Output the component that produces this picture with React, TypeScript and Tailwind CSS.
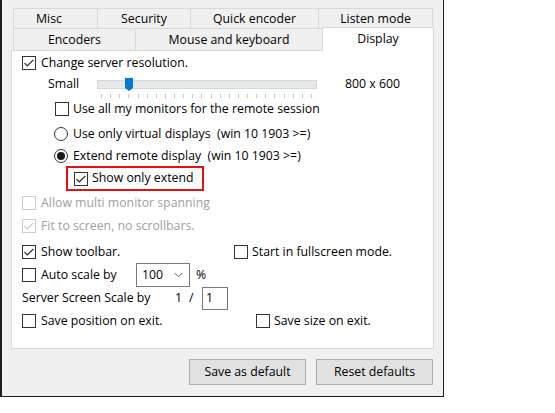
import React from "react";

function CheckBox({ checked = false, disabled = false }: { checked?: boolean; disabled?: boolean }) {
  return (
    <span
      className={
        "flex h-[14px] w-[14px] shrink-0 items-center justify-center border bg-white " +
        (disabled ? "border-[#cccccc]" : "border-[#333333]")
      }
    >
      {checked && (
        <svg width="12" height="12" viewBox="0 0 12 12">
          <path
            d="M1.5 6.2 L4.3 9 L10.4 2.8"
            fill="none"
            stroke={disabled ? "#c8c8c8" : "#222222"}
            strokeWidth="1.2"
          />
        </svg>
      )}
    </span>
  );
}

function Radio({ checked = false }: { checked?: boolean }) {
  return (
    <span className="flex h-[14px] w-[14px] shrink-0 items-center justify-center rounded-full border border-[#333333] bg-white">
      {checked && <span className="h-[8px] w-[8px] rounded-full bg-[#1a1a1a]" />}
    </span>
  );
}

function Tab({ label, w, className = "" }: { label: string; w: string; className?: string }) {
  return (
    <div className={`flex items-center justify-center border-l border-t border-[#d9d9d9] bg-[#f0f0f0] pt-[2px] ${w} ${className}`}>
      {label}
    </div>
  );
}

function Slider() {
  const ticks = Array.from({ length: 24 });
  return (
    <div className="relative mt-[4px] w-[220px]">
      <div className="mt-[2px] h-[9px] border border-[#d6d6d6] bg-[#e7eaea]" />
      <svg className="absolute left-[28px] top-0" width="8" height="13" viewBox="0 0 8 13">
        <path d="M0 0 H8 V10 L4 13 L0 10 Z" fill="#0078d7" />
      </svg>
      <div className="ml-[4px] mt-[5px] flex h-[4px] w-[211px] justify-between">
        {ticks.map((_, i) => (
          <span key={i} className="h-[4px] w-px bg-[#c4c4c4]" />
        ))}
      </div>
    </div>
  );
}

export default function App() {
  return (
    <div className="h-[413px] w-[555px] bg-white font-['Open_Sans',sans-serif] text-[12.3px] leading-none text-black">
      <div className="flex h-[397px] w-[444px] flex-col border-b border-l-2 border-r border-[#1e1e1e] bg-[#f0f0f0]">
        <div className="ml-[9px] w-[423px]">
          {/* tab rows */}
          <div className="ml-[2px] mt-[8px] flex h-[20px]">
            <Tab label="Misc" w="w-[84px]" className="pr-[13px]" />
            <Tab label="Security" w="w-[93px]" />
            <Tab label="Quick encoder" w="w-[128px]" />
            <Tab label="Listen mode" w="w-[115px]" className="border-r" />
          </div>
          <div className="ml-[2px] flex h-[22px] items-start">
            <Tab label="Encoders" w="w-[122px] h-[22px]" />
            <Tab label="Mouse and keyboard" w="w-[187px] h-[22px]" />
            <div className="relative z-10 -mt-px flex h-[24px] w-[112px] items-center justify-center border-l border-r border-t border-[#d9d9d9] bg-white pb-[1px]">
              Display
            </div>
          </div>

          {/* panel */}
          <div className="flex h-[299px] w-[423px] flex-col border border-[#d9d9d9] bg-white pl-[10px]">
            <div className="mt-[2px] flex h-[20px] items-center gap-[5px]">
              <CheckBox checked />
              <span>Change server resolution.</span>
            </div>

            <div className="mt-px flex h-[25px] items-start">
              <span className="ml-[26px] w-[49px] leading-[20px]">Small</span>
              <Slider />
              <span className="ml-[28px] leading-[20px]">800 x 600</span>
            </div>

            <div className="ml-[33px] flex h-[20px] items-center gap-[4px]">
              <CheckBox />
              <span>Use all my monitors for the remote session</span>
            </div>

            <div className="ml-[32px] mt-[5px] flex h-[20px] items-center gap-[5px]">
              <Radio />
              <span>Use only virtual displays&nbsp; (win 10 1903 &gt;=)</span>
            </div>

            <div className="ml-[32px] mt-[2px] flex h-[20px] items-center gap-[5px]">
              <Radio checked />
              <span>Extend remote display&nbsp; (win 10 1903 &gt;=)</span>
            </div>

            <div className="ml-[44px] flex h-[25px] w-[138px] items-center gap-[4px] border-2 border-[#e81010] pl-[6px]">
              <CheckBox checked />
              <span>Show only extend</span>
            </div>

            <div className="mt-[2px] flex h-[20px] items-center gap-[5px] text-[#a0a0a0]">
              <CheckBox disabled />
              <span>Allow multi monitor spanning</span>
            </div>

            <div className="mt-[3px] flex h-[20px] items-center gap-[5px] text-[#a0a0a0]">
              <CheckBox checked disabled />
              <span>Fit to screen, no scrollbars.</span>
            </div>

            <div className="mt-[6px] flex h-[20px] items-center">
              <div className="flex w-[212px] items-center gap-[5px]">
                <CheckBox checked />
                <span>Show toolbar.</span>
              </div>
              <div className="flex items-center gap-[4px]">
                <CheckBox />
                <span>Start in fullscreen mode.</span>
              </div>
            </div>

            <div className="mt-px flex h-[24px] items-center">
              <div className="flex w-[114px] items-center gap-[5px]">
                <CheckBox />
                <span>Auto scale by</span>
              </div>
              <div className="flex h-[24px] w-[54px] items-center justify-between border border-[#7a7a7a] bg-white pl-[5px] pr-[6px]">
                <span>100</span>
                <svg width="9" height="6" viewBox="0 0 9 6">
                  <path d="M0.5 0.8 L4.5 4.8 L8.5 0.8" fill="none" stroke="#606060" strokeWidth="1" />
                </svg>
              </div>
              <span className="ml-[6px]">%</span>
            </div>

            <div className="flex h-[23px] items-center">
              <span className="w-[153px]">Server Screen Scale by</span>
              <span className="w-[14px]">1</span>
              <span className="w-[13px]">/</span>
              <div className="flex h-[23px] w-[26px] items-center border border-[#7a7a7a] bg-white pl-[3px]">
                1
              </div>
            </div>

            <div className="mt-px flex h-[20px] items-center">
              <div className="flex w-[234px] items-center gap-[5px]">
                <CheckBox />
                <span>Save position on exit.</span>
              </div>
              <div className="flex items-center gap-[4px]">
                <CheckBox />
                <span>Save size on exit.</span>
              </div>
            </div>
          </div>

          {/* buttons */}
          <div className="mt-[10px] flex justify-end gap-[10px] pr-px">
            <button className="flex h-[26px] w-[117px] items-center justify-center border border-[#adadad] bg-[#e1e1e1]">
              Save as default
            </button>
            <button className="flex h-[26px] w-[117px] items-center justify-center border border-[#adadad] bg-[#e1e1e1]">
              Reset defaults
            </button>
          </div>
        </div>
      </div>
    </div>
  );
}
